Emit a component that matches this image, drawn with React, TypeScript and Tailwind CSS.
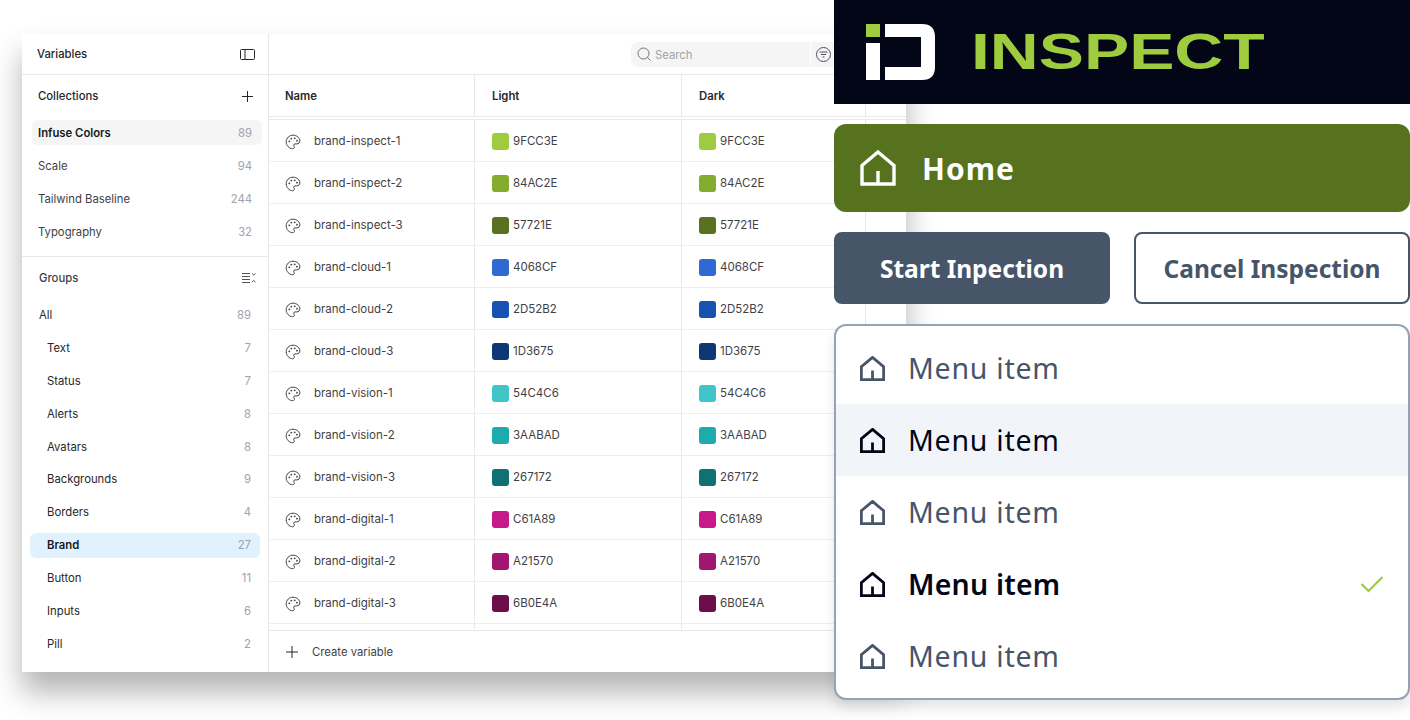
import React from "react";

const rows = [
  ["brand-inspect-1", "9FCC3E", "#9FCC3E"],
  ["brand-inspect-2", "84AC2E", "#84AC2E"],
  ["brand-inspect-3", "57721E", "#57721E"],
  ["brand-cloud-1", "4068CF", "#2F69D2"],
  ["brand-cloud-2", "2D52B2", "#1552B2"],
  ["brand-cloud-3", "1D3675", "#0F3675"],
  ["brand-vision-1", "54C4C6", "#40C6C8"],
  ["brand-vision-2", "3AABAD", "#1EABAD"],
  ["brand-vision-3", "267172", "#0F7172"],
  ["brand-digital-1", "C61A89", "#C61A89"],
  ["brand-digital-2", "A21570", "#A21570"],
  ["brand-digital-3", "6B0E4A", "#6B0E4A"],
];

const collections: [string, number][] = [
  ["Infuse Colors", 89],
  ["Scale", 94],
  ["Tailwind Baseline", 244],
  ["Typography", 32],
];

const groups: [string, number][] = [
  ["Text", 7],
  ["Status", 7],
  ["Alerts", 8],
  ["Avatars", 8],
  ["Backgrounds", 9],
  ["Borders", 4],
  ["Brand", 27],
  ["Button", 11],
  ["Inputs", 6],
  ["Pill", 2],
];

function Palette() {
  return (
    <svg width="16" height="16" viewBox="0 0 16 16" fill="none" className="shrink-0">
      <path
        d="M8 1.200C4.200 1.200 1.200 4.100 1.200 7.800c0 3.700 3 6.900 6.500 6.900 1.100 0 1.700-.7 1.700-1.500 0-.9-.7-1.100-.7-2 0-.8.6-1.300 1.400-1.300h1.600c1.900 0 3.200-1.300 3.200-3C14.900 3.800 11.800 1.200 8 1.200Z"
        stroke="#3f3f46"
        strokeWidth="1"
      />
      <circle cx="4.300" cy="7.300" r="0.900" fill="#3f3f46" />
      <circle cx="6.300" cy="4.600" r="0.900" fill="#3f3f46" />
      <circle cx="9.700" cy="4.300" r="0.900" fill="#3f3f46" />
      <circle cx="12" cy="6.700" r="0.900" fill="#3f3f46" />
    </svg>
  );
}

function House({ size, stroke, width }: { size: number; stroke: string; width: number }) {
  return (
    <svg width={size} height={size} viewBox="0 0 36 36" fill="none" className="shrink-0">
      <path d="M18 2 34 15.500V34H2V15.500Z M18 34V21" stroke={stroke} strokeWidth={width} strokeLinejoin="miter" />
    </svg>
  );
}

function Menu({ dark, bold, bg, check }: { dark?: boolean; bold?: boolean; bg?: boolean; check?: boolean }) {
  const color = dark ? "#020617" : "#475569";
  return (
    <div className={`h-[72px] flex items-center pl-[24px] pr-[24px] gap-[23px] ${bg ? "bg-[#F1F5F9]" : ""}`}>
      <House size={25} stroke={color} width={4} />
      <span
        className={`flex-1 text-[28.500px] leading-none ${bold ? "font-semibold tracking-[0.2px]" : "font-normal tracking-[0.75px]"} ${dark ? "text-[#020617]" : "text-[#475569]"}`}
      >
        Menu item
      </span>
      {check ? (
        <svg width="24" height="18" viewBox="0 0 24 18" fill="none">
          <path d="M1.500 9 8.500 16 22.500 2" stroke="#9FCC3E" strokeWidth="2.200" />
        </svg>
      ) : null}
    </div>
  );
}

function CountRow({ name, n, className, nameClass }: { name: string; n: number; className: string; nameClass: string }) {
  return (
    <div className={`flex items-center justify-between rounded-md text-[11.300px] ${className}`}>
      <span className={nameClass}>{name}</span>
      <span className="text-[#a1a1aa]">{n}</span>
    </div>
  );
}

export default function App() {
  return (
    <div className="w-[1410px] h-[720px] bg-white overflow-hidden flex items-start" style={{ fontFamily: "Inter, sans-serif" }}>
      <div className="ml-[22px] mt-[34px] w-[884px] h-[638px] shrink-0 flex bg-white shadow-[0_20px_28px_rgba(0,0,0,0.3)]">
        <aside className="w-[247px] shrink-0 border-r border-[#e8e8e8] flex flex-col">
          <div className="h-[41px] shrink-0 border-b border-[#e8e8e8] flex items-center justify-between pl-[15px] pr-[13px] pt-[1px]">
            <span className="text-[11.300px] font-medium text-[#27272a]">Variables</span>
            <svg width="15" height="11" viewBox="0 0 15 11" fill="none" className="-mt-[1px]">
              <rect x="0.500" y="0.500" width="14" height="10" rx="1" stroke="#27272a" />
              <path d="M5 .5v10" stroke="#27272a" />
            </svg>
          </div>
          <div className="h-[41px] shrink-0 flex items-center justify-between pl-[16px] pr-[15px] pt-[2px]">
            <span className="text-[11.300px] font-medium text-[#27272a]">Collections</span>
            <svg width="11" height="11" viewBox="0 0 11 11" fill="none">
              <path d="M5.500 0v11M0 5.500h11" stroke="#27272a" />
            </svg>
          </div>
          <div className="flex flex-col pb-[12px] pl-[10px] pr-[6px] gap-[8px] border-b border-[#e8e8e8]">
            {collections.map(([name, n], i) => (
              <CountRow
                key={name}
                name={name}
                n={n}
                className={`h-[25px] pt-[2px] pl-[6px] pr-[10px] ${i === 0 ? "bg-[#f5f5f5] mt-[4px]" : ""}`}
                nameClass={i === 0 ? "font-semibold text-[#18181b]" : "text-[#3f3f46]"}
              />
            ))}
          </div>
          <div className="h-[41px] shrink-0 flex items-center justify-between pl-[17px] pr-[12px] pt-[2px]">
            <span className="text-[11.300px] font-medium text-[#3f3f46]">Groups</span>
            <svg width="14" height="12" viewBox="0 0 14 12" fill="none" stroke="#52525b" className="-mt-[2px]">
              <path d="M0 1.500h8M0 4.500h8M0 7.500h8M0 10.500h8" />
              <path d="M10 1.500 11.700 3 13.500 1.500M10 10 11.700 8.500 13.500 10" />
            </svg>
          </div>
          <div className="flex flex-col px-[8px] gap-[7.900px] mt-[5px]">
            <CountRow name="All" n={89} className="h-[25px] pl-[9px] pr-[9px]" nameClass="text-[#27272a]" />
            {groups.map(([name, n]) => (
              <CountRow
                key={name}
                name={name}
                n={n}
                className={`h-[25px] pl-[17px] pr-[9px] ${name === "Brand" ? "bg-[#e0f2fe]" : ""}`}
                nameClass={name === "Brand" ? "font-semibold text-[#18181b]" : "text-[#27272a]"}
              />
            ))}
          </div>
        </aside>
        <main className="flex-1 min-w-0 flex flex-col">
          <div className="h-[41px] shrink-0 border-b border-[#e8e8e8] flex items-center pl-[362px]">
            <div className="w-[179px] h-[25px] rounded-l-md bg-[#f5f5f5] flex items-center gap-[4px] pl-[6px]">
              <svg width="14" height="14" viewBox="0 0 14 14" fill="none" stroke="#71717a">
                <circle cx="6.500" cy="6.500" r="5.500" />
                <path d="m10.500 10.500 3 3" />
              </svg>
              <span className="text-[11.300px] text-[#a1a1aa] pt-[2px]">Search</span>
            </div>
            <div className="w-[24px] h-[25px] ml-[1px] bg-[#f5f5f5] flex items-center pl-[5px]">
              <svg width="15" height="15" viewBox="0 0 15 15" fill="none" stroke="#52525b">
                <circle cx="7.500" cy="7.500" r="7" />
                <path d="M3.500 5h8M5 7.500h5M6.500 10h2" />
              </svg>
            </div>
          </div>
          <div className="h-[45px] shrink-0 flex border-b-[4px] border-double border-[#e8e8e8] text-[11.300px] font-semibold text-[#27272a]">
            <div className="w-[206px] border-r border-[#e8e8e8] flex items-center pl-[16px] pt-[2px]">Name</div>
            <div className="w-[207px] border-r border-[#e8e8e8] flex items-center pl-[17px] pt-[2px]">Light</div>
            <div className="w-[184px] border-r border-[#e8e8e8] flex items-center pl-[17px] pt-[2px]">Dark</div>
          </div>
          <div className="flex-1 min-h-0 overflow-hidden">
            {rows.map(([name, hex, color]) => (
              <div key={name} className="h-[42px] flex border-b border-[#eeeeee] text-[11.500px] text-[#3f3f46]">
                <div className="w-[206px] border-r border-[#e8e8e8] flex items-center pl-[16px] pt-[2px] gap-[13px]">
                  <Palette />
                  <span>{name}</span>
                </div>
                <div className="w-[207px] border-r border-[#e8e8e8] flex items-center pl-[17px] pt-[2px] gap-[4px]">
                  <span className="w-[17px] h-[17px] rounded-[3px]" style={{ backgroundColor: color }} />
                  <span>{hex}</span>
                </div>
                <div className="w-[184px] border-r border-[#e8e8e8] flex items-center pl-[17px] pt-[2px] gap-[4px]">
                  <span className="w-[17px] h-[17px] rounded-[3px]" style={{ backgroundColor: color }} />
                  <span>{hex}</span>
                </div>
              </div>
            ))}
            <div className="h-[5px] flex">
              <div className="w-[206px] border-r border-[#e8e8e8]" />
              <div className="w-[207px] border-r border-[#e8e8e8]" />
              <div className="w-[184px] border-r border-[#e8e8e8]" />
            </div>
          </div>
          <div className="h-[42px] shrink-0 border-t border-[#e8e8e8] flex items-center pl-[17px] gap-[14px] text-[11.300px] text-[#3f3f46]">
            <svg width="12" height="12" viewBox="0 0 12 12" fill="none">
              <path d="M6 0v12M0 6h12" stroke="#27272a" />
            </svg>
            <span className="pt-[1px]">Create variable</span>
          </div>
        </main>
      </div>

      <div className="-ml-[72px] w-[576px] h-[720px] shrink-0 relative flex flex-col" style={{ fontFamily: '"Noto Sans", sans-serif' }}>
        <header className="h-[104px] shrink-0 bg-[#020617] flex items-center pl-[32px]">
          <svg width="69" height="56" viewBox="0 0 69 56" fill="none" className="shrink-0">
            <rect x="0" y="0" width="14" height="13" fill="#9FCC3E" />
            <rect x="0" y="19" width="14" height="37" fill="#fff" />
            <path d="M19 0H56Q69 0 69 13V43Q69 56 56 56H19V43H55V13H19Z" fill="#fff" />
          </svg>
          <span
            className="ml-[36px] w-[292px] text-[50px] leading-none font-bold text-[#9FCC3E] origin-left scale-x-[1.355]"
            style={{ fontFamily: '"Liberation Sans", sans-serif', display: "inline-block" }}
          >
            INSPECT
          </span>
        </header>
        <div className="mt-[20px] h-[88px] shrink-0 rounded-xl bg-[#57721E] flex items-center pl-[26px] gap-[26px]">
          <House size={36} stroke="#ffffff" width={3.400} />
          <span className="text-[30px] font-bold text-white tracking-[1px]">Home</span>
        </div>
        <div className="mt-[20px] h-[72px] shrink-0 flex gap-[24px]">
          <div className="w-[276px] rounded-lg bg-[#475569] flex items-center justify-center text-[24.500px] font-bold text-white pt-[2px]">
            Start Inpection
          </div>
          <div className="w-[276px] rounded-lg bg-white border-2 border-[#475569] flex items-center justify-center text-[24.500px] font-bold text-[#475569] pt-[2px]">
            Cancel Inspection
          </div>
        </div>
        <div className="mt-[20px] h-[376px] shrink-0 rounded-xl bg-white border-2 border-[#94A3B8] shadow-[0_8px_12px_rgba(0,0,0,0.1)] overflow-hidden pt-[6px]">
          <Menu />
          <Menu dark bg />
          <Menu />
          <Menu dark bold check />
          <Menu />
        </div>
      </div>
    </div>
  );
}
